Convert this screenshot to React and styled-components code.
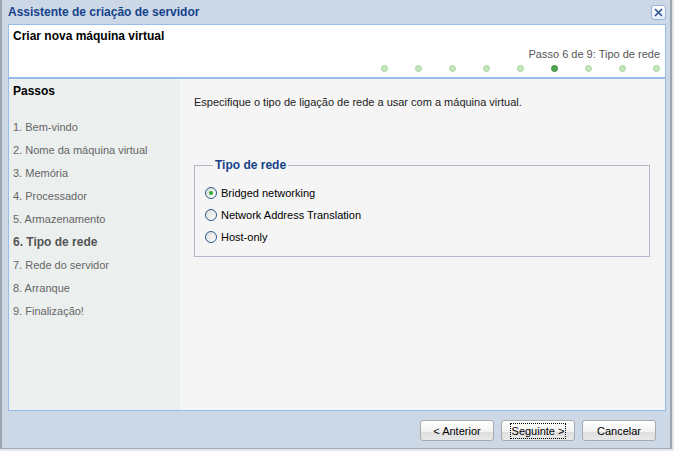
import React, { useState } from "react";
import styled, { createGlobalStyle } from "styled-components";

const GlobalStyle = createGlobalStyle`
    html, body {
        margin: 0;
        padding: 0;
        background-color: #e4e6e9;
        font-family: "Liberation Sans", Arial, sans-serif;
        font-size: 11px;
    }
`;

const Window = styled.div`
    width: 668px;
    height: 448px;
    background-color: #cdd8e6;
    border-left: 2px solid #9ba5b0;
    border-right: 2px solid #9ba5b0;
    border-bottom: 1px solid #a3abb5;
    display: flex;
    flex-direction: column;
`;

const TitleBar = styled.div`
    height: 24px;
    display: flex;
    align-items: center;
    justify-content: space-between;
    padding: 0 4px 0 6px;
    flex-shrink: 0;
`;

const Title = styled.span`
    color: #15428b;
    font-weight: bold;
    font-size: 12px;
`;

const CloseButton = styled.button`
    width: 15px;
    height: 15px;
    padding: 0;
    border: 1px solid #99b3d6;
    border-radius: 3px;
    background: linear-gradient(#ffffff, #e6eef8);
    display: flex;
    align-items: center;
    justify-content: center;
    cursor: pointer;
`;

const Panel = styled.div`
    margin: 0 4px 0 6px;
    border: 1px solid #99bbe8;
    flex: 1;
    display: flex;
    flex-direction: column;
    min-height: 0;
`;

const Header = styled.div`
    height: 49px;
    background-color: #ffffff;
    border-bottom: 2px solid #99bbe8;
    padding: 3px 5px 0 4px;
    display: flex;
    flex-direction: column;
    flex-shrink: 0;
`;

const HeaderTitle = styled.div`
    font-weight: bold;
    font-size: 12px;
    color: #000;
    line-height: 16px;
`;

const StepLabel = styled.div`
    align-self: flex-end;
    color: #555;
    font-size: 11px;
    line-height: 13px;
    margin-top: 4px;
`;

const Dots = styled.div`
    align-self: flex-end;
    display: flex;
    gap: 27px;
    margin-top: 4px;
`;

const Dot = styled.span`
    width: 7px;
    height: 7px;
    border-radius: 50%;
    box-sizing: border-box;
    background-color: ${(p) => (p.$active ? "#4fa84f" : "#c4e6be")};
    border: 1px solid ${(p) => (p.$active ? "#3a8a3a" : "#a9d6a2")};
`;

const Main = styled.div`
    flex: 1;
    display: flex;
    min-height: 0;
`;

const Sidebar = styled.div`
    width: 167px;
    background-color: #ebefee;
    padding: 5px 0 0 4px;
`;

const SidebarTitle = styled.div`
    font-weight: bold;
    font-size: 12px;
    color: #000;
    line-height: 14px;
    margin-bottom: 18px;
`;

const StepItem = styled.div`
    line-height: 23px;
    color: ${(p) => (p.$active ? "#555" : "#666")};
    font-weight: ${(p) => (p.$active ? "bold" : "normal")};
    font-size: ${(p) => (p.$active ? "12px" : "11px")};
`;

const Content = styled.div`
    flex: 1;
    background-color: #f5f5f5;
    padding: 16px 14px 0 14px;
`;

const Intro = styled.p`
    margin: 0;
    color: #222;
    line-height: 14px;
`;

const Fieldset = styled.fieldset`
    margin: 49px 0 0 0;
    width: 456px;
    height: 99px;
    box-sizing: border-box;
    border: 1px solid #b5b8c8;
    padding: 14px 10px 0 10px;
    display: flex;
    flex-direction: column;
    gap: 8px;
`;

const Legend = styled.legend`
    color: #15428b;
    font-weight: bold;
    font-size: 12px;
    padding: 0 2px;
    margin-left: 8px;
`;

const RadioRow = styled.label`
    display: flex;
    align-items: center;
    gap: 4px;
    color: #000;
    line-height: 14px;
    cursor: pointer;
`;

const RadioCircle = styled.span`
    width: 12px;
    height: 12px;
    box-sizing: border-box;
    border-radius: 50%;
    border: 1px solid #2b5a8c;
    background: linear-gradient(135deg, #dcdcd6, #ffffff);
    display: flex;
    align-items: center;
    justify-content: center;
    &::after {
        content: "";
        width: 4px;
        height: 4px;
        border-radius: 50%;
        background-color: #2fa92f;
        display: ${(p) => (p.$checked ? "block" : "none")};
    }
`;

const Footer = styled.div`
    height: 37px;
    display: flex;
    justify-content: flex-end;
    align-items: flex-start;
    gap: 7px;
    padding: 9px 14px 0 0;
    box-sizing: border-box;
    flex-shrink: 0;
`;

const Button = styled.button`
    width: 74px;
    height: 21px;
    padding: 0;
    font-family: "Liberation Sans", Arial, sans-serif;
    font-size: 11px;
    color: #000;
    border: 1px solid #a7a9ae;
    border-radius: 3px;
    background: linear-gradient(#ffffff 0%, #f3f3f3 55%, #e0e0e0 60%, #e8e8e8 100%);
    cursor: pointer;
`;

const FocusLabel = styled.span`
    outline: 1px dotted #000;
    padding: 1px 1px;
`;

const steps = [
    "1. Bem-vindo",
    "2. Nome da máquina virtual",
    "3. Memória",
    "4. Processador",
    "5. Armazenamento",
    "6. Tipo de rede",
    "7. Rede do servidor",
    "8. Arranque",
    "9. Finalização!",
];

const networks = ["Bridged networking", "Network Address Translation", "Host-only"];

export default function App() {
    const [rede, setRede] = useState(0);
    const current = 5;

    return (
        <>
            <GlobalStyle />
            <Window>
                <TitleBar>
                    <Title>Assistente de criação de servidor</Title>
                    <CloseButton aria-label="Fechar">
                        <svg width="9" height="9" viewBox="0 0 9 9">
                            <path d="M1 1 L8 8 M8 1 L1 8" stroke="#2d4f8f" strokeWidth="1.6" />
                        </svg>
                    </CloseButton>
                </TitleBar>

                <Panel>
                    <Header>
                        <HeaderTitle>Criar nova máquina virtual</HeaderTitle>
                        <StepLabel>Passo 6 de 9: Tipo de rede</StepLabel>
                        <Dots>
                            {steps.map((s, i) => (
                                <Dot key={s} $active={i === current} />
                            ))}
                        </Dots>
                    </Header>

                    <Main>
                        <Sidebar>
                            <SidebarTitle>Passos</SidebarTitle>
                            {steps.map((s, i) => (
                                <StepItem key={s} $active={i === current}>
                                    {s}
                                </StepItem>
                            ))}
                        </Sidebar>

                        <Content>
                            <Intro>Especifique o tipo de ligação de rede a usar com a máquina virtual.</Intro>
                            <Fieldset>
                                <Legend>Tipo de rede</Legend>
                                {networks.map((n, i) => (
                                    <RadioRow key={n} onClick={() => setRede(i)}>
                                        <RadioCircle $checked={rede === i} />
                                        {n}
                                    </RadioRow>
                                ))}
                            </Fieldset>
                        </Content>
                    </Main>
                </Panel>

                <Footer>
                    <Button>&lt; Anterior</Button>
                    <Button>
                        <FocusLabel>Seguinte &gt;</FocusLabel>
                    </Button>
                    <Button>Cancelar</Button>
                </Footer>
            </Window>
        </>
    );
}
